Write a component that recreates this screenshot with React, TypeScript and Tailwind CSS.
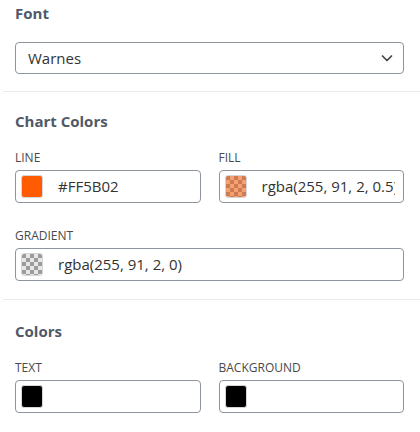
import React from 'react';

const Checker = ({ id, tint }: { id: string; tint?: string }) => (
  <svg width="22" height="23" viewBox="0 0 22 23" className="block">
    <defs>
      <pattern id={id} width="8" height="8" patternUnits="userSpaceOnUse">
        <rect width="8" height="8" fill="#e6e6e6" />
        <rect width="4" height="4" fill="#9c9c9c" />
        <rect x="4" y="4" width="4" height="4" fill="#9c9c9c" />
      </pattern>
    </defs>
    <rect width="22" height="23" fill={`url(#${id})`} />
    {tint && <rect width="22" height="23" fill={tint} />}
  </svg>
);

const Swatch = ({ children, color }: { children?: React.ReactNode; color?: string }) => (
  <div
    className="w-[22px] h-[23px] shrink-0 rounded-[3px] overflow-hidden border border-[#d4d6da]"
    style={color ? { backgroundColor: color } : undefined}
  >
    {children}
  </div>
);

const ColorInput = ({ swatch, value }: { swatch: React.ReactNode; value?: string }) => (
  <div className="h-[33px] flex items-center gap-[15px] pl-[5px] pr-[8px] border border-[#8e949c] rounded-[4px] bg-white overflow-hidden">
    {swatch}
    {value && <span className="text-[15px] text-[#333333] whitespace-nowrap overflow-hidden">{value}</span>}
  </div>
);

const Label = ({ children }: { children: React.ReactNode }) => (
  <div className="text-[12px] leading-[16px] text-[#4a4a4a] uppercase mb-[4px]">{children}</div>
);

const Header = ({ children }: { children: React.ReactNode }) => (
  <h3 className="text-[15px] leading-[20px] font-bold text-[#4f5968]">{children}</h3>
);

const Divider = () => <div className="ml-[3px] h-px bg-[#e8eaed]" />;

export default function App() {
  return (
    <div className="w-[420px] h-[432px] bg-white overflow-hidden" style={{ fontFamily: '"Open Sans", "Noto Sans", sans-serif' }}>
      <section className="pl-[15px] pr-[16px] pt-[3px] pb-[17px]">
        <Header>Font</Header>
        <div className="mt-[19px] h-[32px] flex items-center justify-between pl-[12px] pr-[9px] border border-[#8e949c] rounded-[4px]">
          <span className="text-[15px] text-[#333333]">Warnes</span>
          <svg width="14" height="14" viewBox="0 0 14 14" fill="none" stroke="#444" strokeWidth="1.7" strokeLinecap="round" strokeLinejoin="round">
            <path d="M2.5 5 L7 9.5 L11.5 5" />
          </svg>
        </div>
      </section>
      <Divider />

      <section className="pl-[15px] pr-[16px] pt-[19px] pb-[18px]">
        <Header>Chart Colors</Header>
        <div className="mt-[19px] grid grid-cols-2 gap-x-[18px]">
          <div>
            <Label>Line</Label>
            <ColorInput swatch={<Swatch color="#FF5B02" />} value="#FF5B02" />
          </div>
          <div>
            <Label>Fill</Label>
            <ColorInput
              swatch={
                <Swatch>
                  <Checker id="fill" tint="rgba(255, 91, 2, 0.5)" />
                </Swatch>
              }
              value="rgba(255, 91, 2, 0.5)"
            />
          </div>
        </div>
        <div className="mt-[25px]">
          <Label>Gradient</Label>
          <ColorInput
            swatch={
              <Swatch>
                <Checker id="grad" />
              </Swatch>
            }
            value="rgba(255, 91, 2, 0)"
          />
        </div>
      </section>
      <Divider />

      <section className="pl-[15px] pr-[16px] pt-[21px] pb-[18px]">
        <Header>Colors</Header>
        <div className="mt-[19px] grid grid-cols-2 gap-x-[18px]">
          <div>
            <Label>Text</Label>
            <ColorInput swatch={<Swatch color="#000000" />} />
          </div>
          <div>
            <Label>Background</Label>
            <ColorInput swatch={<Swatch color="#000000" />} />
          </div>
        </div>
      </section>
    </div>
  );
}
